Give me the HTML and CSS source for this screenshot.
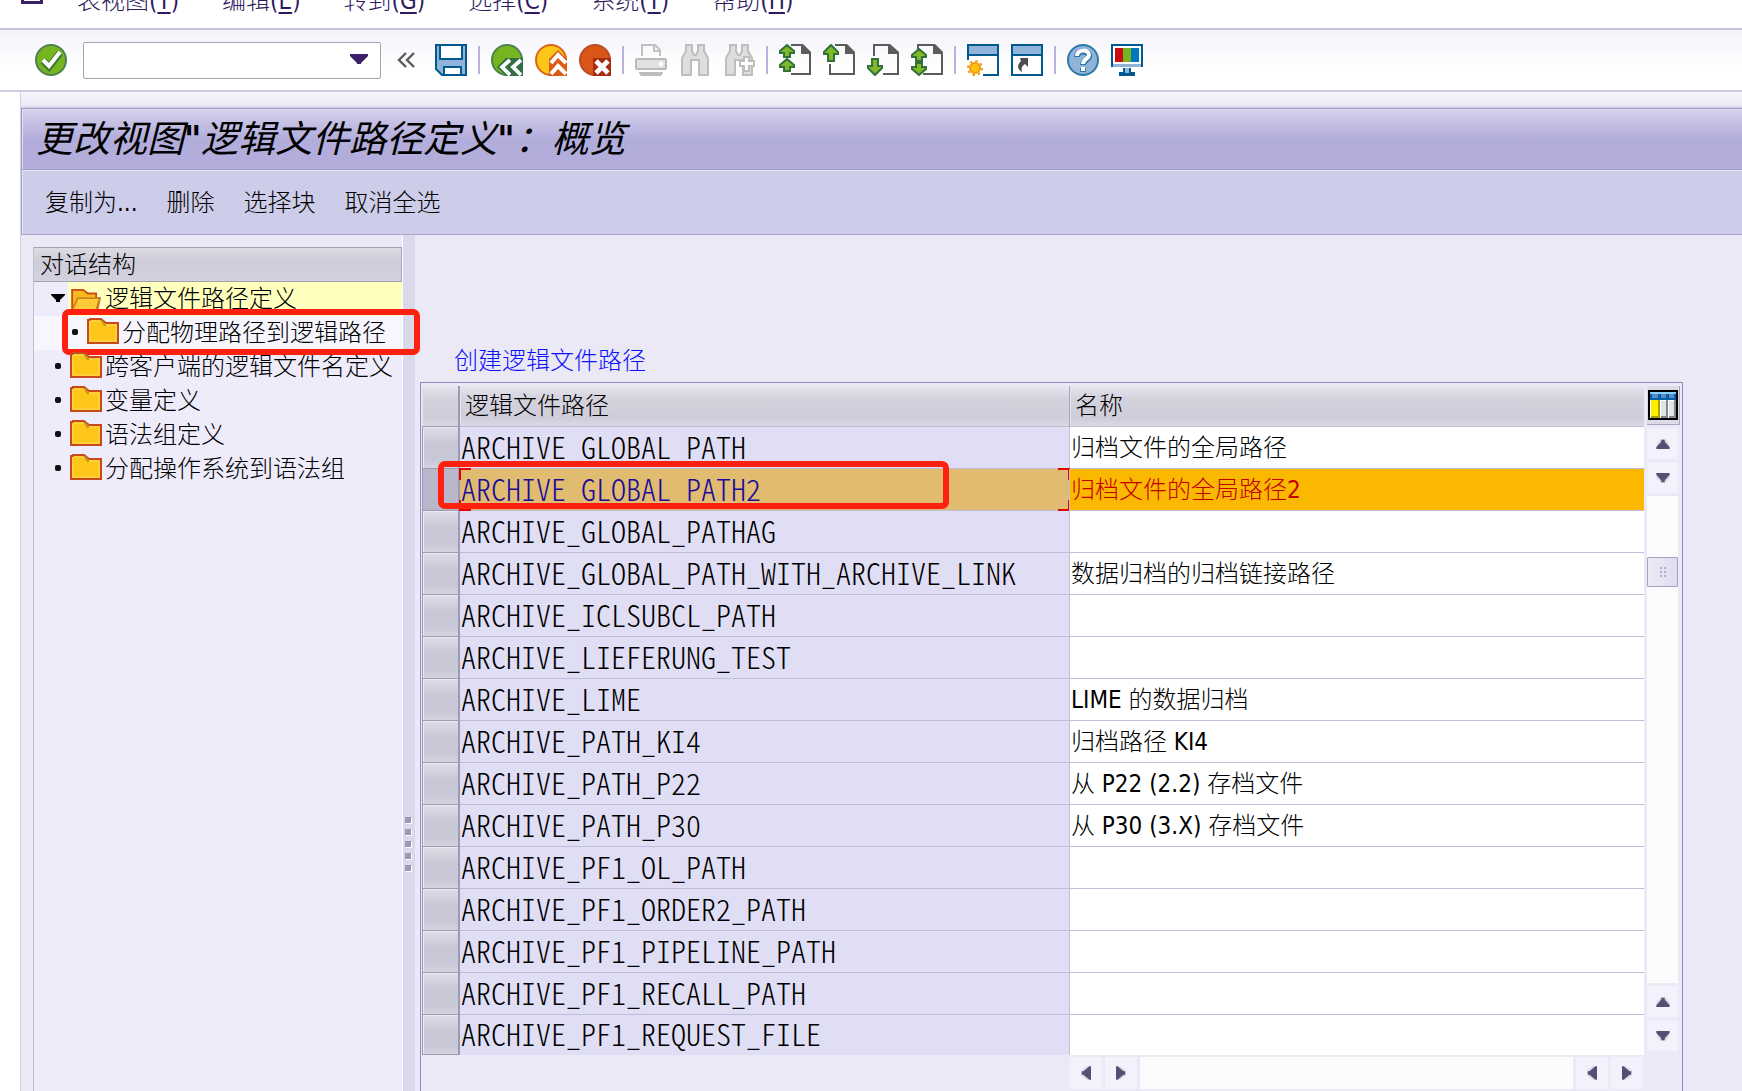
FILE: index.html
```html
<!DOCTYPE html>
<html lang="zh-CN">
<head>
<meta charset="utf-8">
<title>更改视图"逻辑文件路径定义"：概览</title>
<link rel="stylesheet" href="styles.css">
</head>
<body>
<svg class="defs" width="0" height="0" aria-hidden="true">
  <defs>
    <symbol id="folder" viewBox="0 0 32 26">
      <path d="M1 2h2V1h11l5 4h12v20H1z" fill="#ffc61a" stroke="#c8491c" stroke-width="2"/>
      <path d="M3 23V3h10l5 4h11v16z" fill="none" stroke="#ffd75a" stroke-width="1"/>
      <path d="M13 2h2l4 4v2h-2z" fill="#c9961a"/>
    </symbol>
    <symbol id="folder-open" viewBox="0 0 32 26">
      <path d="M1 24V2h12l5 4h9v5h4l-3 14H2z" fill="#f9b81c" stroke="#c8491c" stroke-width="2"/>
      <path d="M2 22l5-11h24l-4 13" fill="#ffc93a" stroke="#c9861a" stroke-width="2"/>
    </symbol>
    <symbol id="page" viewBox="0 0 32 32">
      <path d="M12 1h11l8 8v21H12" fill="none" stroke="#5c5c5c" stroke-width="2"/>
      <path d="M22 0h2l8 8v2H22z" fill="#5c5c5c"/>
    </symbol>
    <symbol id="arrow-up" viewBox="0 0 16 18">
      <path d="M8 1l7 7v2h-4v7H5v-7H1V8z" fill="#7fb92a" stroke="#33703a" stroke-width="2"/>
    </symbol>
    <symbol id="arrow-short" viewBox="0 0 16 14">
      <path d="M8 1l7 6v2h-4v4H5V9H1V7z" fill="#7fb92a" stroke="#33703a" stroke-width="2"/>
    </symbol>
    <symbol id="tri" viewBox="0 0 18 12">
      <path d="M1 7L6 0h6l5 7v3H1z" fill="#dcdbe6"/>
      <path d="M1 12V10L7 3V1h4v2l6 7v2z" fill="#535173"/>
    </symbol>
  </defs>
</svg>
<div class="app">
  <nav class="menubar">
    <span class="menu-icon"></span>
    <a href="#">表视图(<u>T</u>)</a>
    <a href="#">编辑(<u>E</u>)</a>
    <a href="#">转到(<u>G</u>)</a>
    <a href="#">选择(<u>C</u>)</a>
    <a href="#">系统(<u>T</u>)</a>
    <a href="#">帮助(<u>H</u>)</a>
  </nav>

  <div class="toolbar">
    <button class="tool tool-enter" aria-label="Enter"><svg viewBox="0 0 32 32"><circle cx="16" cy="16" r="15" fill="#76b51f" stroke="#4c8050" stroke-width="2"/><path d="M8 17l6 6L25 9" fill="none" stroke="#3f7a35" stroke-width="7"/><path d="M8 16l6 6L25 8" fill="none" stroke="#fff" stroke-width="4"/></svg></button>
    <div class="command">
      <input type="text" aria-label="Command">
      <svg class="command-arrow" viewBox="0 0 18 10"><path d="M0 0h18v2l-7 7v1H7V9L0 2z" fill="#3a2068"/></svg>
    </div>
    <button class="collapse" aria-label="Collapse"><svg viewBox="0 0 18 16"><path d="M9 1L2 8l7 7M17 1l-7 7 7 7" fill="none" stroke="#5c5c5c" stroke-width="2.4"/></svg></button>
    <button class="tool" aria-label="Save"><svg viewBox="0 0 32 32"><path d="M1 1h30v30H7l-6-6z" fill="#8fb3d9" stroke="#005a8f" stroke-width="2"/><path d="M5 1h22v14H5z" fill="#fff" stroke="#005a8f" stroke-width="2"/><path d="M9 23h17v8H9z" fill="#fff" stroke="#005a8f" stroke-width="2"/></svg></button>
    <span class="sep"></span>
    <button class="tool" aria-label="Back"><svg viewBox="0 0 32 32"><circle cx="16" cy="16" r="15" fill="#76b51f" stroke="#4c8050" stroke-width="2"/><path d="M6 23l9-9h17v18H15z" fill="#2f7040"/><path d="M19 16l-8 7 8 8M30 16l-8 7 8 8" fill="none" stroke="#fff" stroke-width="3.8"/></svg></button>
    <button class="tool" aria-label="Exit"><svg viewBox="0 0 32 32"><circle cx="16" cy="16" r="15" fill="#ffc61a" stroke="#dd6417" stroke-width="2"/><path d="M14 15l9-9 9 9v17H14z" fill="#dd5a14"/><path d="M16 19l7-8 8 8M16 30l7-8 8 8" fill="none" stroke="#fff" stroke-width="4"/></svg></button>
    <button class="tool" aria-label="Cancel"><svg viewBox="0 0 32 32"><circle cx="16" cy="16" r="15" fill="#d85716" stroke="#bd4a2a" stroke-width="2"/><path d="M14 14h18v18H14z" fill="#a92c10"/><path d="M17 17l12 12M29 17L17 29" stroke="#fff" stroke-width="4.8"/></svg></button>
    <span class="sep"></span>
    <button class="tool" disabled aria-label="Print"><svg viewBox="0 0 32 32"><path d="M7 12V1h13l5 5v6M19 1v6h6" fill="none" stroke="#c2c2c2" stroke-width="2"/><rect x="1" y="15" width="30" height="10" rx="1" fill="#e2e2e2" stroke="#b9b9b9" stroke-width="2"/><path d="M24 18h4v4h-4z" fill="#fff"/><path d="M4 28h24v1l-2 3H6l-2-3z" fill="#bdbdbd"/></svg></button>
    <button class="tool" disabled aria-label="Find"><svg viewBox="0 0 32 32"><path d="M3 31V14l4-7V1h6v6l2 4h2l2-4V1h6v6l4 7v17h-9V16h-8v15z" fill="#dedede" stroke="#bebebe" stroke-width="2"/></svg></button>
    <button class="tool" disabled aria-label="Find next"><svg viewBox="0 0 32 32"><path d="M3 31V14l4-7V1h6v6l2 4h2l2-4V1h6v6l4 7v17h-9V16h-8v15z" fill="#dedede" stroke="#bebebe" stroke-width="2"/><path d="M21 13h5v4h5v5h-5v5h-5v-5h-4v-5h4z" fill="#fff" stroke="#bebebe" stroke-width="2"/></svg></button>
    <span class="sep"></span>
    <button class="tool" aria-label="First page"><svg viewBox="0 0 32 32"><use href="#page"/><use href="#arrow-short" width="16" height="14"/><use href="#arrow-short" y="14" width="16" height="14"/></svg></button>
    <button class="tool" aria-label="Previous page"><svg viewBox="0 0 32 32"><use href="#page"/><path d="M7 20v10h6" fill="none" stroke="#5c5c5c" stroke-width="2"/><use href="#arrow-up" width="16" height="18"/></svg></button>
    <button class="tool" aria-label="Next page"><svg viewBox="0 0 32 32"><path d="M7 12V1h15l9 8v21H16" fill="none" stroke="#5c5c5c" stroke-width="2"/><path d="M21 0h2l9 8v2H21z" fill="#5c5c5c"/><use href="#arrow-up" width="16" height="18" transform="matrix(1 0 0 -1 0 32)"/></svg></button>
    <button class="tool" aria-label="Last page"><svg viewBox="0 0 32 32"><use href="#page"/><path d="M7 5V1h8" fill="none" stroke="#5c5c5c" stroke-width="2"/><use href="#arrow-short" y="4" width="16" height="14"/><use href="#arrow-short" width="16" height="14" transform="matrix(1 0 0 -1 0 32)"/></svg></button>
    <span class="sep"></span>
    <button class="tool" aria-label="New session"><svg viewBox="0 0 32 32"><path d="M1 16V1h30v30H16" fill="#fff" stroke="#005a8f" stroke-width="2"/><path d="M2 2h28v8H2z" fill="#8fb3d9"/><path d="M0 11h32" stroke="#005a8f" stroke-width="2"/><path d="M0 16h16v16H0z" fill="#fff"/><circle cx="8" cy="24" r="5" fill="#ffc30f" stroke="#f49a12" stroke-width="2"/><circle cx="8" cy="24" r="7" fill="none" stroke="#f49a12" stroke-width="2" stroke-dasharray="2.5 3"/></svg></button>
    <button class="tool" aria-label="Create shortcut"><svg viewBox="0 0 32 32"><path d="M1 1h30v30H1z" fill="#fff" stroke="#005a8f" stroke-width="2"/><path d="M2 2h28v8H2z" fill="#8fb3d9"/><path d="M0 11h32" stroke="#005a8f" stroke-width="2"/><path d="M9 14h8v9l-3-3c-3 2-4 4-3 8-5-3-5-7-1-11z" fill="#4d4d4d"/></svg></button>
    <span class="sep"></span>
    <button class="tool" aria-label="Help"><svg viewBox="0 0 32 32"><circle cx="16" cy="16" r="15" fill="#8fb3d9" stroke="#2f79a8" stroke-width="2"/><path d="M10 13c0-7 12-7 12-1 0 4-6 4-6 9M16 24v4" fill="none" stroke="#2f79a8" stroke-width="6"/><path d="M10 12c0-7 12-7 12-1 0 4-6 4-6 9M16 23v4" fill="none" stroke="#fff" stroke-width="4"/></svg></button>
    <button class="tool" aria-label="Customize layout"><svg viewBox="0 0 32 32"><path d="M1 1h30v21H1z" fill="#fff" stroke="#005a8f" stroke-width="2"/><path d="M2 20h28v3H2z" fill="#8fb3d9"/><path d="M4 4h8v14H4z" fill="#cc0a10"/><path d="M12 4h8v14h-8z" fill="#77b51c"/><path d="M20 4h8v14h-8z" fill="#0079c1"/><path d="M12 24h8v4h4v4H8v-4h4z" fill="#005a8f"/><path d="M14 24h4v5h-4z" fill="#8fb3d9"/></svg></button>
  </div>

  <main class="screen">
    <h1 class="title">更改视图<b>"</b>逻辑文件路径定义<b>"</b>：概览</h1>
    <div class="actions">
      <button>复制为...</button>
      <button>删除</button>
      <button>选择块</button>
      <button>取消全选</button>
    </div>
    <div class="body">
      <section class="tree">
        <h2>对话结构</h2>
        <ul>
          <li class="current"><span class="mark"><svg width="14" height="8" viewBox="0 0 14 8"><path d="M0 0h14v1L9 6v2H5V6L0 1z"/></svg></span><a href="#"><svg class="folder"><use href="#folder-open"/></svg>逻辑文件路径定义</a></li>
          <li class="child marked"><span class="mark dot"></span><a href="#"><svg class="folder"><use href="#folder"/></svg>分配物理路径到逻辑路径</a></li>
          <li><span class="mark dot"></span><a href="#"><svg class="folder"><use href="#folder"/></svg>跨客户端的逻辑文件名定义</a></li>
          <li><span class="mark dot"></span><a href="#"><svg class="folder"><use href="#folder"/></svg>变量定义</a></li>
          <li><span class="mark dot"></span><a href="#"><svg class="folder"><use href="#folder"/></svg>语法组定义</a></li>
          <li><span class="mark dot"></span><a href="#"><svg class="folder"><use href="#folder"/></svg>分配操作系统到语法组</a></li>
        </ul>
      </section>
      <div class="splitter"><i></i><i></i><i></i><i></i><i></i></div>
      <section class="content">
        <p class="caption">创建逻辑文件路径</p>
        <div class="grid">
          <table>
            <colgroup><col class="c-sel"><col class="c-path"><col></colgroup>
            <thead><tr><th class="sel"></th><th>逻辑文件路径</th><th>名称</th></tr></thead>
            <tbody>
              <tr><td class="sel"></td><td class="path">ARCHIVE_GLOBAL_PATH</td><td>归档文件的全局路径</td></tr>
              <tr class="selected"><td class="sel"></td><td class="path"><span class="focus"></span>ARCHIVE_GLOBAL_PATH2<span class="highlight"></span></td><td>归档文件的全局路径2</td></tr>
              <tr><td class="sel"></td><td class="path">ARCHIVE_GLOBAL_PATHAG</td><td></td></tr>
              <tr><td class="sel"></td><td class="path">ARCHIVE_GLOBAL_PATH_WITH_ARCHIVE_LINK</td><td>数据归档的归档链接路径</td></tr>
              <tr><td class="sel"></td><td class="path">ARCHIVE_ICLSUBCL_PATH</td><td></td></tr>
              <tr><td class="sel"></td><td class="path">ARCHIVE_LIEFERUNG_TEST</td><td></td></tr>
              <tr><td class="sel"></td><td class="path">ARCHIVE_LIME</td><td>LIME 的数据归档</td></tr>
              <tr><td class="sel"></td><td class="path">ARCHIVE_PATH_KI4</td><td>归档路径 KI4</td></tr>
              <tr><td class="sel"></td><td class="path">ARCHIVE_PATH_P22</td><td>从 P22 (2.2) 存档文件</td></tr>
              <tr><td class="sel"></td><td class="path">ARCHIVE_PATH_P30</td><td>从 P30 (3.X) 存档文件</td></tr>
              <tr><td class="sel"></td><td class="path">ARCHIVE_PF1_OL_PATH</td><td></td></tr>
              <tr><td class="sel"></td><td class="path">ARCHIVE_PF1_ORDER2_PATH</td><td></td></tr>
              <tr><td class="sel"></td><td class="path">ARCHIVE_PF1_PIPELINE_PATH</td><td></td></tr>
              <tr><td class="sel"></td><td class="path">ARCHIVE_PF1_RECALL_PATH</td><td></td></tr>
              <tr><td class="sel"></td><td class="path">ARCHIVE_PF1_REQUEST_FILE</td><td></td></tr>
            </tbody>
          </table>
          <div class="vscroll">
            <button class="config" aria-label="Table settings"><svg viewBox="0 0 30 30"><path d="M1 1h28v28H1z" fill="#fff" stroke="#000" stroke-width="2"/><path d="M2 2h26v8H2z" fill="#0061a8"/><path d="M2 2h26v2H2z" fill="#86d0ff"/><path d="M4 4h6v4H4zM13 4h5v4h-5zM21 4h5v4h-5z" fill="#5d8cc4"/><path d="M3 10h8v17H3z" fill="#ffee00"/><path d="M10 10h2v18H3v-2h7z" fill="#a89f00"/><path d="M13 11h5v15h-5zM21 11h5v15h-5z" fill="#dfe4ea"/><path d="M18 10h2v18h-7v-2h5zM26 10h2v18h-7v-2h5z" fill="#858585"/></svg></button>
            <button class="step" aria-label="Scroll up"><svg><use href="#tri"/></svg></button>
            <button class="step down" aria-label="Scroll down"><svg><use href="#tri"/></svg></button>
            <div class="track"><span class="thumb"><i></i><i></i><i></i><i></i><i></i><i></i></span></div>
            <button class="step" aria-label="Previous row"><svg><use href="#tri"/></svg></button>
            <button class="step down" aria-label="Next row"><svg><use href="#tri"/></svg></button>
          </div>
          <div class="hscroll">
            <button class="step left" aria-label="Scroll left"><svg><use href="#tri"/></svg></button>
            <button class="step right" aria-label="Scroll right"><svg><use href="#tri"/></svg></button>
            <div class="track"></div>
            <button class="step left" aria-label="Previous column"><svg><use href="#tri"/></svg></button>
            <button class="step right" aria-label="Next column"><svg><use href="#tri"/></svg></button>
          </div>
        </div>
      </section>
    </div>
  </main>
</div>
</body>
</html>
```
FILE: styles.css
```css
* { box-sizing: border-box; }

body {
  margin: 0;
  background: #fff;
  color: #000;
  font: 300 24px/34px "DejaVu Sans Condensed", "Noto Sans CJK SC", sans-serif;
}

button {
  padding: 0;
  border: 0;
  background: none;
  color: inherit;
  font: inherit;
}

a { color: inherit; text-decoration: none; }
svg { display: block; }
.defs { position: absolute; }

.app {
  display: flex;
  flex-direction: column;
  height: 100vh;
  min-width: 1200px;
  overflow: hidden;
}

/* menu bar */
.menubar {
  display: flex;
  flex: none;
  align-items: flex-end;
  gap: 43px;
  height: 30px;
  padding: 0 21px 10px;
  border-bottom: 2px solid #c7c4dc;
  color: #2e1a5e;
  white-space: nowrap;
  overflow: hidden;
}
.menu-icon {
  width: 22px;
  height: 22px;
  margin: 0 -9px 14px 0;
  border: 3px solid #3a2068;
}
.menubar u { text-underline-offset: 3px; }

/* system toolbar */
.toolbar {
  display: flex;
  flex: none;
  align-items: center;
  height: 62px;
  padding-left: 35px;
  border-bottom: 2px solid #cfccdf;
  background: linear-gradient(#f3f2fa, #fff 60%);
}
.tool { flex: none; width: 32px; height: 32px; margin-right: 12px; }
.tool svg { width: 32px; height: 32px; }
.tool-enter { margin-right: 16px; }
.sep { width: 2px; height: 28px; margin: 0 11px 0 -1px; background: #b9b2de; }
.command { position: relative; width: 298px; }
.command input {
  display: block;
  width: 100%;
  height: 37px;
  padding: 0 40px 0 8px;
  border: 1px solid #a5a3b2;
  border-radius: 2px;
  background: #fff;
  font: inherit;
}
.command-arrow { position: absolute; right: 13px; top: 12px; width: 18px; height: 10px; }
.collapse { margin: 0 20px 0 16px; }
.collapse svg { width: 18px; height: 16px; }

/* screen */
.screen {
  display: flex;
  flex: 1;
  flex-direction: column;
  min-height: 0;
  margin-left: 20px;
  padding-top: 16px;
  border-left: 1px solid #d3d0e0;
  background: linear-gradient(#f6f5fb, #ece9f6 14px, #d6d3e2 15px, #d6d3e2 16px, #eae9f5 17px);
}
.title {
  flex: none;
  height: 62px;
  margin: 0;
  padding-left: 14px;
  border: 1px solid #9e99c6;
  border-right: 0;
  background: linear-gradient(#d5d2ec, #b2addb 50%);
  box-shadow: inset 1px 1px #e0def2;
  font: italic 400 37px/62px "DejaVu Sans Condensed", "Noto Sans CJK SC", sans-serif;
}
.title b { font-weight: 700; }
.actions {
  display: flex;
  flex: none;
  gap: 29px;
  height: 65px;
  padding: 2px 0 0 23px;
  border: solid #a9a5cd;
  border-width: 0 0 1px 1px;
  background: #cecde9;
  box-shadow: inset 1px 1px #e6e5f4;
}

.body { display: flex; flex: 1; min-height: 0; }

/* dialog structure */
.tree {
  flex: none;
  width: 369px;
  margin: 12px 0 0 12px;
  border-left: 1px solid #c2c0ce;
  background: #eeecfa;
}
.tree h2 {
  height: 35px;
  margin: 0;
  padding-left: 6px;
  border: 1px solid #a5a3b2;
  border-left: 0;
  background: linear-gradient(#dddce4, #cfcdd9 40%, #d3d1dd);
  font: inherit;
}
.tree ul { margin: 0; padding: 0; list-style: none; }
.tree li { position: relative; display: flex; height: 34px; white-space: nowrap; }
.mark { display: flex; flex: none; justify-content: center; width: 34px; padding: 12px 0 0 14px; }
.dot::before { content: ""; width: 6px; height: 6px; margin-top: 1px; border-radius: 2px; background: #111; }
.tree a { display: flex; flex: 1; gap: 3px; padding-left: 2px; }
.folder { flex: none; width: 32px; height: 26px; margin-top: 2px; }
.current a { background: #ffffbe; }
.current .folder { margin-top: 6px; height: 24px; }
.child { padding-left: 17px; background: #f7f6fe; }
.marked::after {
  content: "";
  position: absolute;
  inset: -7px -18px -5px 28px;
  border: 6px solid #ff2010;
  border-radius: 7px;
}

.splitter {
  display: flex;
  flex: none;
  flex-direction: column;
  justify-content: flex-end;
  gap: 6px;
  width: 13px;
  padding: 0 0 220px 2px;
  border-left: 1px solid #fff;
  background: #dad9eb;
}
.splitter i { width: 6px; height: 6px; background: #9c98b6; box-shadow: 1px 1px #fff; }

/* table control */
.content { display: flex; flex: 1; flex-direction: column; min-width: 0; padding: 109px 59px 0 5px; }
.caption { margin: 0 0 4px; padding-left: 34px; color: #0f0fff; }
.grid {
  display: grid;
  flex: 1;
  grid-template: auto 1fr / 1fr 33px;
  column-gap: 3px;
  padding: 3px 2px 0 1px;
  border: 1px solid #9189cc;
  border-bottom: 0;
}
table { width: 100%; border-collapse: separate; border-spacing: 0; table-layout: fixed; }
.c-sel { width: 38px; }
.c-path { width: 609px; }
th {
  height: 41px;
  padding: 0 5px;
  border: solid #c0bdd6;
  border-width: 0 0 1px 0;
  background: linear-gradient(#e6e5ef, #d4d2dd 30%, #cfcdd9 80%, #dad8e3);
  box-shadow: inset 1px 0 #e4e3ec;
  font-weight: inherit;
  line-height: 40px;
  text-align: left;
}
th + th + th { border-left: 1px solid #a9a6bd; }
td {
  position: relative;
  height: 42px;
  padding: 0 0 0 1px;
  border-bottom: 1px solid #c0bdd6;
  background: #fff;
  line-height: 40px;
  white-space: nowrap;
}
td:last-child { border-left: 1px solid #c0bdd6; }
.path {
  padding-bottom: 4px;
  background: #e0def4;
  font-family: "Noto Sans CJK SC", sans-serif;
  font-feature-settings: "hwid";
  font-size: 30px;
  line-height: 36px;
}
td.sel {
  border: solid #9c99b2;
  border-width: 0 2px 1px 1px;
  background: linear-gradient(#dddce6, #c9c8d6 40%, #c9c8d6 80%, #d5d3df);
  box-shadow: inset 1px 1px #ecebf2;
}
th.sel { border-right: 2px solid #9c99b2; border-bottom-color: #9c99b2; }
tr:last-child td { height: 40px; border-bottom: 0; line-height: 36px; }
tr:last-child td.sel { border-bottom: 1px solid #9c99b2; }
.selected td { background: #fab900; color: #c40000; }
.selected td.path { background: #e0bb70; color: #1a0a9c; }
.selected td.sel { background: #b9b8ca; box-shadow: none; }

/* cursor brackets round the focused cell */
.focus {
  position: absolute;
  inset: -1px -1px -1px -1px;
  border: 2px solid #e60000;
  clip-path: polygon(0 0, 12px 0, 12px 2px, 2px 2px, 2px 12px, 0 12px, 0 32px, 2px 32px, 2px calc(100% - 2px), 12px calc(100% - 2px), 12px 100%, calc(100% - 12px) 100%, calc(100% - 12px) calc(100% - 2px), calc(100% - 2px) calc(100% - 2px), calc(100% - 2px) 32px, 100% 32px, 100% 12px, calc(100% - 2px) 12px, calc(100% - 2px) 2px, calc(100% - 12px) 2px, calc(100% - 12px) 0, 100% 0, 100% 100%, 0 100%);
}
.highlight {
  position: absolute;
  z-index: 1;
  left: -22px;
  top: -8px;
  width: 511px;
  height: 48px;
  border: 6px solid #ff2010;
  border-radius: 7px;
}

/* scroll bars */
.vscroll { display: flex; flex-direction: column; gap: 3px; padding-bottom: 4px; }
.config {
  width: 33px;
  height: 39px;
  border: solid #a9a6bd;
  border-width: 0 1px 1px 0;
  background: #dcdbe6;
}
.config svg { width: 30px; height: 30px; margin: 0 0 0 1px; }
.step {
  display: flex;
  flex: none;
  align-items: center;
  justify-content: center;
  width: 31px;
  height: 31px;
  background: #f3f1fb;
}
.step svg { width: 16px; height: 10px; }
.down svg { transform: rotate(180deg); }
.left svg { transform: rotate(-90deg); }
.right svg { transform: rotate(90deg); }
.track { flex: 1; background: #fbfbfb; }
.vscroll .track { width: 31px; padding-top: 61px; }
.thumb {
  display: grid;
  grid-template-columns: 2px 2px;
  gap: 2px;
  place-content: center;
  height: 30px;
  border: 1px solid #a5a1bf;
  border-radius: 1px;
  background: linear-gradient(90deg, #ecebf5, #dedcf0);
}
.thumb i { width: 2px; height: 2px; background: #b0adc6; }
.hscroll { display: flex; grid-column: 1; gap: 3px; height: 32px; margin: 2px 1px 0 648px; }
.hscroll .step { width: 32px; height: 32px; }
```
